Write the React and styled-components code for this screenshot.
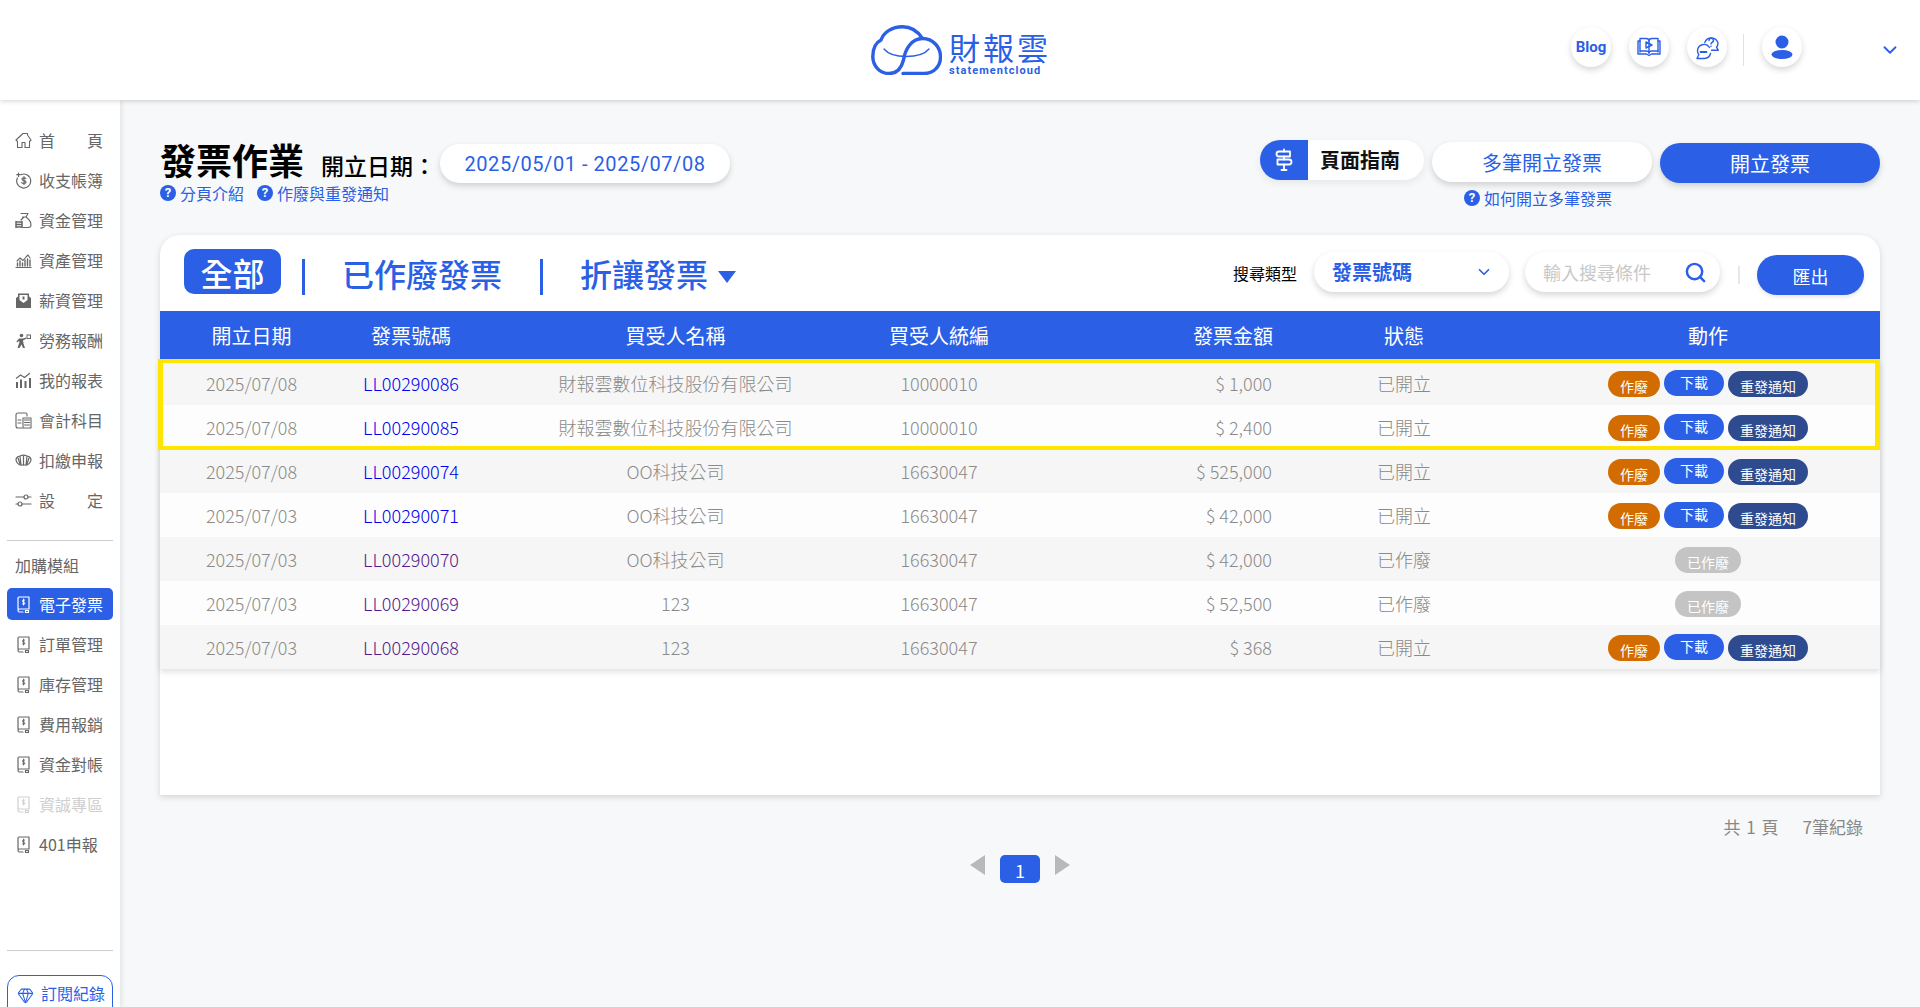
import React from 'react'
import styled, { createGlobalStyle } from 'styled-components'
import { ChevronDown, Search, Gem } from 'lucide-react'

const BLUE = '#2a5fe6'
const FONT = '"Noto Sans CJK TC", "Noto Sans", sans-serif'

const GlobalStyle = createGlobalStyle`
    html, body {
        margin: 0;
        height: 100%;
        overflow: hidden;
        background: #f7f8fa;
        font-family: ${FONT};
    }
    * { box-sizing: border-box; }
`

const Page = styled.div`
    height: 1007px;
    display: flex;
    flex-direction: column;
    overflow: hidden;
`

const Header = styled.header`
    height: 100px;
    flex: none;
    background: #fff;
    box-shadow: 0 1px 5px rgba(0,0,0,.18);
    display: grid;
    grid-template-columns: 1fr auto 1fr;
    position: relative;
    z-index: 3;
`

const Logo = styled.div`
    grid-column: 2;
    display: flex;
    align-items: flex-start;
    gap: 7px;
    padding-top: 25px;
`

const LogoText = styled.div`
    display: flex;
    flex-direction: column;
    color: ${BLUE};
    width: 100px;
    .cn {
        font-size: 31px;
        line-height: 37px;
        padding-top: 3px;
        letter-spacing: 3px;
        white-space: nowrap;
    }
    .en {
        font-family: Roboto, sans-serif;
        font-size: 11px;
        font-weight: 700;
        line-height: 12px;
        letter-spacing: 1.05px;
        white-space: nowrap;
    }
`

const HeaderTools = styled.div`
    grid-column: 3;
    display: flex;
    align-items: flex-start;
    justify-content: flex-end;
    padding: 27px 19px 0 0;
`

const RoundBtn = styled.div`
    width: 40px;
    height: 40px;
    border-radius: 50%;
    background: #fff;
    box-shadow: 0 3px 6px rgba(0,0,0,.16);
    display: flex;
    align-items: center;
    justify-content: center;
    color: ${BLUE};
    margin-right: ${p => p.$gap || 18}px;
    font-family: Roboto, sans-serif;
    font-size: 15px;
    font-weight: 700;
`

const HeadSep = styled.div`
    width: 1px;
    height: 32px;
    margin: 7px 18px 0 0;
    background: #e2e2e2;
`

const HeadChevron = styled(ChevronDown)`
    margin: 12px 0 0 -3px;
    color: ${BLUE};
`

const Body = styled.div`
    flex: 1;
    display: flex;
    min-height: 0;
`

const Sidebar = styled.aside`
    width: 120px;
    flex: none;
    background: #fff;
    box-shadow: 2px 0 5px rgba(0,0,0,.08);
    padding: 16px 7px 0;
    overflow: hidden;
    position: relative;
    z-index: 2;
`

const NavItem = styled.div`
    height: 32px;
    margin-top: 8px;
    padding-left: 8px;
    display: flex;
    align-items: center;
    gap: 7px;
    border-radius: 5px;
    font-size: 16px;
    color: ${p => (p.$active ? '#fff' : p.$disabled ? '#cfcfcf' : '#666')};
    background: ${p => (p.$active ? BLUE : 'transparent')};
    svg { flex: none; }
`

const NavLabel = styled.span`
    width: 64px;
    white-space: nowrap;
    text-align: ${p => (p.$spread ? 'justify' : 'left')};
    text-align-last: ${p => (p.$spread ? 'justify' : 'left')};
`

const SideLine = styled.div`
    height: 1px;
    background: #ccc;
    margin-top: ${p => p.$top}px;
`

const GroupLabel = styled.div`
    height: 28px;
    margin-top: 11px;
    padding: 0 0 1px 8px;
    margin-bottom: 1px;
    line-height: 26px;
    font-size: 16px;
    color: #666;
`

const SubscribeBtn = styled.div`
    height: 44px;
    margin-top: 24px;
    border: 1.5px solid ${BLUE};
    border-radius: 12px;
    padding: 5px 0 0 9px;
    display: flex;
    align-items: flex-start;
    gap: 7px;
    color: ${BLUE};
    font-size: 16px;
    white-space: nowrap;
    svg { margin-top: 6px; }
`

const Main = styled.main`
    flex: 1;
    min-width: 0;
    padding: 0 40px;
`

const TopRow = styled.div`
    height: 135px;
    display: flex;
    justify-content: space-between;
`

const TitleBlock = styled.div`
    padding-top: 44px;
`

const TitleLine = styled.div`
    height: 39px;
    display: flex;
    align-items: center;
`

const Title = styled.h1`
    margin: 0 17px 9px 0;
    font-size: 36px;
    line-height: 40px;
    font-weight: 700;
    color: #000;
    white-space: nowrap;
`

const DateLabel = styled.span`
    width: 119px;
    font-size: 23px;
    font-weight: 500;
    color: #000;
    white-space: nowrap;
    margin-top: 3px;
`

const DatePill = styled.div`
    width: 290px;
    height: 39px;
    border-radius: 20px;
    background: #fff;
    box-shadow: 0 3px 6px rgba(0,0,0,.16);
    display: flex;
    align-items: center;
    justify-content: center;
    color: ${BLUE};
    font-family: Roboto, sans-serif;
    font-size: 20px;
    letter-spacing: .55px;
    white-space: nowrap;
`

const HelpLinks = styled.div`
    display: flex;
    gap: 13px;
    height: 20px;
`

const HelpLink = styled.span`
    display: inline-flex;
    align-items: center;
    gap: 4px;
    font-size: 16px;
    line-height: 20px;
    color: ${BLUE};
    white-space: nowrap;
`

const HelpDot = styled.i`
    width: 16px;
    height: 16px;
    border-radius: 50%;
    background: ${BLUE};
    color: #fff;
    font-style: normal;
    font-family: Roboto, sans-serif;
    font-weight: 700;
    font-size: 13px;
    line-height: 16px;
    text-align: center;
    flex: none;
`

const RightBlock = styled.div`
    padding-top: 40px;
    display: flex;
    flex-direction: column;
`

const ActionRow = styled.div`
    display: flex;
    align-items: flex-start;
`

const GuideBtn = styled.div`
    width: 164px;
    height: 40px;
    border-radius: 20px;
    background: #fff;
    box-shadow: 0 3px 8px rgba(0,0,0,.07);
    display: flex;
    overflow: hidden;
    margin-right: 8px;
    .ico {
        width: 48px;
        background: ${BLUE};
        color: #fff;
        display: flex;
        align-items: center;
        justify-content: center;
    }
    .txt {
        flex: 1;
        padding-right: 12px;
        text-align: center;
        font-size: 20px;
        font-weight: 700;
        line-height: 40px;
        color: #111;
    }
`

const PillBtn = styled.div`
    width: 220px;
    height: 40px;
    margin-top: ${p => p.$top}px;
    margin-left: ${p => p.$left || 0}px;
    border-radius: 20px;
    background: ${p => (p.$primary ? BLUE : '#fff')};
    color: ${p => (p.$primary ? '#fff' : BLUE)};
    box-shadow: 0 3px 6px rgba(0,0,0,.16);
    text-align: center;
    font-size: 20px;
    line-height: 41px;
`

const HintLink = styled(HelpLink)`
    align-self: flex-end;
    margin: 5px 268px 0 0;
`

const Card = styled.section`
    height: 560px;
    background: #fff;
    border-radius: 20px 20px 0 0;
    box-shadow: 0 2px 6px rgba(0,0,0,.15);
`

const Toolbar = styled.div`
    height: 76px;
    display: flex;
    align-items: center;
    padding: 0 16px 0 24px;
`

const ActiveTab = styled.div`
    width: 97px;
    height: 45px;
    margin-top: -4px;
    border-radius: 10px;
    background: ${BLUE};
    color: #fff;
    font-size: 32px;
    font-weight: 500;
    line-height: 47px;
    text-align: center;
`

const TabSep = styled.div`
    width: 3px;
    height: 36px;
    margin: 8px 0 0 ${p => p.$left || 0}px;
    background: ${BLUE};
`

const Tab = styled.div`
    margin: 0 ${p => p.$right}px 0 ${p => p.$left}px;
    color: ${BLUE};
    font-size: 32px;
    font-weight: 500;
    line-height: 40px;
    white-space: nowrap;
`

const Caret = styled.div`
    width: 0;
    height: 0;
    margin: 8px 0 0 -31px;
    border-left: 9.5px solid transparent;
    border-right: 9.5px solid transparent;
    border-top: 12px solid ${BLUE};
`

const SearchTools = styled.div`
    margin-left: auto;
    display: flex;
    align-items: center;
`

const SearchLabel = styled.span`
    font-size: 16px;
    color: #000;
    margin-right: 17px;
    white-space: nowrap;
`

const SelectBox = styled.div`
    width: 195px;
    height: 40px;
    border-radius: 20px;
    background: #fff;
    box-shadow: 0 3px 6px rgba(0,0,0,.16);
    display: flex;
    align-items: center;
    justify-content: space-between;
    padding: 0 16px 0 18px;
    color: ${BLUE};
    font-size: 20px;
    font-weight: 700;
    margin: -3px 16px 0 0;
`

const SearchBox = styled.div`
    width: 195px;
    height: 40px;
    border-radius: 20px;
    background: #fff;
    box-shadow: 0 3px 6px rgba(0,0,0,.16);
    display: flex;
    align-items: center;
    justify-content: space-between;
    padding: 0 13px 0 18px;
    font-size: 18px;
    color: #c8c8c8;
    margin-top: -2px;
    svg { color: ${BLUE}; }
`

const ToolSep = styled.div`
    width: 2px;
    height: 18px;
    margin: 3px 17px 0 18px;
    background: #ece6e2;
`

const ExportBtn = styled.div`
    width: 107px;
    height: 40px;
    border-radius: 20px;
    background: ${BLUE};
    color: #fff;
    text-align: center;
    font-size: 18px;
    line-height: 42px;
    margin-top: 4px;
    box-shadow: 0 2px 4px rgba(0,0,0,.1);
`

const columns = '183px 136px 393px 134px 334px 128px 1fr'

const TableHead = styled.div`
    height: 50px;
    padding-bottom: 2px;
    display: grid;
    grid-template-columns: ${columns};
    background: ${BLUE};
    color: #fff;
    font-size: 20px;
    align-items: center;
    text-align: center;
`

const Rows = styled.div`
    position: relative;
    box-shadow: 0 3px 6px rgba(0,0,0,.12);
`

const Row = styled.div`
    height: 44px;
    display: grid;
    grid-template-columns: ${columns};
    align-items: center;
    text-align: center;
    font-size: 18px;
    font-weight: 300;
    color: #8a8a8a;
    background: ${p => (p.$odd ? '#f6f6f6' : '#fdfdfd')};
`

const Cell = styled.div`
    padding-bottom: 1px;
    white-space: nowrap;
`

const HeadAmount = styled.div`
    padding-left: 120px;
`

const HeadActions = styled.div`
    padding-left: 68px;
`

const AmountCell = styled(Cell)`
    text-align: right;
    padding-right: 68px;
`

const InvoiceLink = styled.a`
    color: ${p => (p.$visited ? '#551a8b' : '#0000ee')};
    text-decoration: none;
`

const ActionCell = styled.div`
    padding-left: 68px;
    display: flex;
    justify-content: center;
    align-items: center;
    gap: 4px;
`

const RowBtn = styled.div`
    width: ${p => p.$w}px;
    height: 26px;
    border-radius: 13px;
    background: ${p => p.$bg};
    color: #fff;
    font-size: 14px;
    font-weight: 400;
    line-height: ${p => (p.$up ? 24 : 30)}px;
    text-align: center;
    overflow: hidden;
    margin-top: ${p => (p.$up ? -1 : 1)}px;
`

const Highlight = styled.div`
    position: absolute;
    top: -2px;
    left: -2px;
    right: 0;
    height: 91px;
    border-style: solid;
    border-color: #ffe600;
    border-width: 4px 5px;
    pointer-events: none;
`

const Summary = styled.div`
    display: flex;
    justify-content: flex-end;
    gap: 24px;
    padding: 20px 17px 0 0;
    font-size: 17px;
    line-height: 24px;
    word-spacing: 2px;
    color: #888;
`

const Pager = styled.div`
    display: flex;
    justify-content: center;
    align-items: flex-start;
    gap: 15px;
    margin-top: 16px;
`

const PageNo = styled.div`
    width: 40px;
    height: 28px;
    border-radius: 5px;
    background: ${BLUE};
    color: #fff;
    font-size: 18px;
    line-height: 31px;
    text-align: center;
`

const Arrow = styled.div`
    width: 0;
    height: 0;
    border-top: 10px solid transparent;
    border-bottom: 10px solid transparent;
    ${p => (p.$left
        ? 'border-right: 15px solid #b9b9b9;'
        : 'border-left: 15px solid #b9b9b9;')}
`

const lineIcon = { fill: 'none', stroke: 'currentColor', strokeWidth: 1.5, strokeLinecap: 'round', strokeLinejoin: 'round' }

const CloudLogo = () => (
    <svg width="71" height="50" viewBox="0 0 71 50" fill="none" stroke={BLUE} strokeWidth="3.4" strokeLinecap="round">
        <path d="M32 48.5H53C63 48.5 69.5 41 69.5 32C69.5 22 62 13.5 51.5 13.5C46 5 39 1.8 31.5 1.8C21 1.8 13 7 10 15C4 18 1.8 25 1.8 31.5C1.8 41 9 48.5 18 48.5C26 48.5 30.5 43 32.5 35C34 25 40 13.5 51.5 13.5" />
        <path d="M13 24C18 30 28 31.5 35 31.5C43 31.5 53 30 58 24" strokeWidth="1.4" />
    </svg>
)

const VideoBook = () => (
    <svg width="24" height="20" viewBox="0 0 24 20" {...lineIcon} strokeWidth="1.4">
        <path d="M3 4H1v13h8.5l2.5 1.5 2.5-1.5H23V4h-2" />
        <path d="M3 15V1.5h6c2 0 3 1 3 2.5v12c0-1-1-2-3-2H3" />
        <path d="M21 15V1.5h-6c-2 0-3 1-3 2.5" />
        <path d="M21 14h-6c-2 0-3 1-3 2" />
        <path d="M9 5v6l6-3z" />
    </svg>
)

const ChatHelp = () => (
    <svg width="25" height="25" viewBox="0 0 25 25" {...lineIcon} strokeWidth="1.4">
        <path d="M9.8 7.5A7 7 0 0 1 23 8c0 2-.5 3.2-1.5 4.2l1.8 3h-6.8" />
        <path d="M14.5 12.5A6.5 6.5 0 0 0 2.5 16c0 1.5.5 2.8 1.3 3.8L2 23.5h7.5a6.5 6.5 0 0 0 6-5" />
        <path d="M5.5 17h6" strokeWidth="1.8" />
        <path d="M14 5.5a2.2 2.2 0 1 1 3 2c-.6.3-1 .7-1 1.5" />
        <path d="M16 11.2v.2" />
    </svg>
)

const UserIcon = () => (
    <svg width="22" height="24" viewBox="0 0 22 24" fill={BLUE}>
        <circle cx="11" cy="7" r="6.5" />
        <ellipse cx="11" cy="19.5" rx="10.5" ry="4.5" />
    </svg>
)

const GuidePost = () => (
    <svg width="24" height="24" viewBox="0 0 24 24" {...lineIcon} strokeWidth="1.8">
        <path d="M7 3.5h11v5H7a2.5 2.5 0 0 1 0-5z" />
        <path d="M5.5 11.500H17a2.500 2.500 0 0 1 0 5H5.500z" />
        <path d="M12 1.5v2M12 8.5v3M12 16.5v5.500M9.500 22h5" />
    </svg>
)

const HomeIcon = () => (
    <svg width="17" height="17" viewBox="0 0 17 17" {...lineIcon} strokeWidth="1.1">
        <path d="M1 8L8 1.5h4.5V3L16 8l-1.5 1.5V15.5H10V10.5H7V15.5H2.5V9.5z" />
    </svg>
)

const CoinIcon = () => (
    <svg width="17" height="17" viewBox="0 0 17 17" {...lineIcon} strokeWidth="1.2">
        <path d="M6 2.6A7 7 0 1 1 2.4 6" />
        <path d="M3.5 1v3.5M1.8 2.7h3.4" />
        <path d="M10.8 6.6C10.4 5.6 7 5.4 7 7.2c0 1.8 4 1 4 2.9 0 1.8-3.5 1.6-4.2.5M9 4.5v8" />
    </svg>
)

const MoneyBag = () => (
    <svg width="17" height="17" viewBox="0 0 17 17" {...lineIcon} strokeWidth="1.1">
        <path d="M6 1.5h7L11 5c2 1.5 5 5 5 8 0 1.5-1 2.5-3 2.5H8M7.5 5h4M9 5L6 8" />
        <path d="M1 10h6M1 12.5h6M1 15h6M1 9.5v6M7 9.5v6" strokeWidth="1.5" />
    </svg>
)

const AssetChart = () => (
    <svg width="17" height="17" viewBox="0 0 17 17" {...lineIcon} strokeWidth="1.1">
        <path d="M1 15.5h15" />
        <path d="M2.5 14v-3M5 14V9M7.5 14v-3M10 14V8M12.5 14V7M15 14V8" strokeWidth="1.4" />
        <path d="M2 9l3-3 3 2.5 3-3.5 2-2 2 3" />
    </svg>
)

const SalaryIcon = () => (
    <svg width="17" height="17" viewBox="0 0 17 17" fill="currentColor">
        <path d="M1 6l2-1.5V1.500h11v3L16 6v10H1zM4.500 3v5l4 3 4-3V3z" fillRule="evenodd" />
        <path d="M7.500 4.500h2v3h-2z" />
    </svg>
)

const WorkerIcon = () => (
    <svg width="17" height="17" viewBox="0 0 17 17" fill="currentColor">
        <circle cx="6.5" cy="3.5" r="1.8" />
        <path d="M4 6.5h4l3-1 .5 1-3.5 2 .5 3L10 16H8l-1.5-3.5L4.5 16H2.5L4.5 10l-.5-1-2 1.5-.5-1z" />
        <path d="M11.5 2.5H16V7h-4.5zM12.5 3.5V6H15V3.5z" fillRule="evenodd" />
    </svg>
)

const ReportIcon = () => (
    <svg width="17" height="17" viewBox="0 0 17 17" fill="currentColor">
        <path d="M1 10h2v6H1zM5 7.5h2V16H5zM9.5 9h2v7h-2zM14 6h2v10h-2z" />
        <path d="M1 6.5L5.5 3l4 2.5L15 1" fill="none" stroke="currentColor" strokeWidth="1.1" />
    </svg>
)

const LedgerIcon = () => (
    <svg width="17" height="17" viewBox="0 0 17 17" {...lineIcon} strokeWidth="1.1">
        <path d="M12 4V2.5C12 1.5 11.5 1 10.5 1H3C2 1 1 2 1 3v11c0 1 .8 2 2 2h4" />
        <path d="M8 6h8v10H8zM9.5 8h5M9.5 10.5h5M9.5 13h5M3 8h3M3 11h3" />
    </svg>
)

const WithholdIcon = () => (
    <svg width="17" height="17" viewBox="0 0 17 17" {...lineIcon} strokeWidth="1.2">
        <path d="M1 7c0 3 2 5 4 6h7c2-1 4-3 4-6-1-2-3-3-4-3-2-1-5-1-7 0C4 4 2 5 1 7z" />
        <path d="M5 4.5L6 13M8.5 4v9M12 4.5L11 13M3 6l2 6M14 6l-2 6" />
    </svg>
)

const SlidersIcon = () => (
    <svg width="17" height="17" viewBox="0 0 17 17" {...lineIcon} strokeWidth="1.2">
        <path d="M1 5h8M13 5h3M1 12h2M7 12h9" />
        <circle cx="11" cy="5" r="2" />
        <circle cx="5" cy="12" r="2" />
    </svg>
)

const BookIcon = () => (
    <svg width="17" height="17" viewBox="0 0 17 17" {...lineIcon} strokeWidth="1.2">
        <path d="M3 13V2c0-.6.4-1 1-1h10v12H4.5C3.5 13 3 13.8 3 14.5S3.5 16 4.5 16H8" />
        <path d="M10.5 14.5h3v2h-3z" />
        <path d="M9.8 4.3C9.4 3.7 7.4 3.7 7.4 5.1c0 1.4 2.5.8 2.5 2.2 0 1.3-2.1 1.2-2.6.5M8.6 3v6" strokeWidth="1" />
    </svg>
)

const mainNav = [
    { label: '首 頁', icon: <HomeIcon />, spread: true },
    { label: '收支帳簿', icon: <CoinIcon /> },
    { label: '資金管理', icon: <MoneyBag /> },
    { label: '資產管理', icon: <AssetChart /> },
    { label: '薪資管理', icon: <SalaryIcon /> },
    { label: '勞務報酬', icon: <WorkerIcon /> },
    { label: '我的報表', icon: <ReportIcon /> },
    { label: '會計科目', icon: <LedgerIcon /> },
    { label: '扣繳申報', icon: <WithholdIcon /> },
    { label: '設 定', icon: <SlidersIcon />, spread: true },
]

const moduleNav = [
    { label: '電子發票', active: true },
    { label: '訂單管理' },
    { label: '庫存管理' },
    { label: '費用報銷' },
    { label: '資金對帳' },
    { label: '資誠專區', disabled: true },
    { label: '401申報' },
]

const LONG_NAME = '財報雲數位科技股份有限公司'

const invoices = [
    { date: '2025/07/08', no: 'LL00290086', buyer: LONG_NAME, tax: '10000010', amount: '$ 1,000', open: true },
    { date: '2025/07/08', no: 'LL00290085', buyer: LONG_NAME, tax: '10000010', amount: '$ 2,400', open: true },
    { date: '2025/07/08', no: 'LL00290074', buyer: 'OO科技公司', tax: '16630047', amount: '$ 525,000', open: true },
    { date: '2025/07/03', no: 'LL00290071', buyer: 'OO科技公司', tax: '16630047', amount: '$ 42,000', open: true },
    { date: '2025/07/03', no: 'LL00290070', buyer: 'OO科技公司', tax: '16630047', amount: '$ 42,000', open: false, visited: true },
    { date: '2025/07/03', no: 'LL00290069', buyer: '123', tax: '16630047', amount: '$ 52,500', open: false, visited: true },
    { date: '2025/07/03', no: 'LL00290068', buyer: '123', tax: '16630047', amount: '$ 368', open: true, visited: true },
]

const App = () => (
    <Page>
        <GlobalStyle />
        <Header>
            <Logo>
                <CloudLogo />
                <LogoText>
                    <span className="cn">財報雲</span>
                    <span className="en">statementcloud</span>
                </LogoText>
            </Logo>
            <HeaderTools>
                <RoundBtn>Blog</RoundBtn>
                <RoundBtn><VideoBook /></RoundBtn>
                <RoundBtn $gap={16}><ChatHelp /></RoundBtn>
                <HeadSep />
                <RoundBtn $gap={80}><UserIcon /></RoundBtn>
                <HeadChevron size={22} strokeWidth={2} />
            </HeaderTools>
        </Header>
        <Body>
            <Sidebar>
                {mainNav.map(item => (
                    <NavItem key={item.label}>
                        {item.icon}
                        <NavLabel $spread={item.spread}>{item.label}</NavLabel>
                    </NavItem>
                ))}
                <SideLine $top={24} />
                <GroupLabel>加購模組</GroupLabel>
                {moduleNav.map(item => (
                    <NavItem key={item.label} $active={item.active} $disabled={item.disabled}>
                        <BookIcon />
                        <NavLabel>{item.label}</NavLabel>
                    </NavItem>
                ))}
                <SideLine $top={90} />
                <SubscribeBtn>
                    <Gem size={17} strokeWidth={1.5} />
                    訂閱紀錄
                </SubscribeBtn>
            </Sidebar>
            <Main>
                <TopRow>
                    <TitleBlock>
                        <TitleLine>
                            <Title>發票作業</Title>
                            <DateLabel>開立日期：</DateLabel>
                            <DatePill>2025/05/01 - 2025/07/08</DatePill>
                        </TitleLine>
                        <HelpLinks>
                            <HelpLink><HelpDot>?</HelpDot>分頁介紹</HelpLink>
                            <HelpLink><HelpDot>?</HelpDot>作廢與重發通知</HelpLink>
                        </HelpLinks>
                    </TitleBlock>
                    <RightBlock>
                        <ActionRow>
                            <GuideBtn>
                                <div className="ico"><GuidePost /></div>
                                <div className="txt">頁面指南</div>
                            </GuideBtn>
                            <PillBtn $top={2}>多筆開立發票</PillBtn>
                            <PillBtn $top={3} $left={8} $primary>開立發票</PillBtn>
                        </ActionRow>
                        <HintLink><HelpDot>?</HelpDot>如何開立多筆發票</HintLink>
                    </RightBlock>
                </TopRow>
                <Card>
                    <Toolbar>
                        <ActiveTab>全部</ActiveTab>
                        <TabSep $left={21} />
                        <Tab $left={37} $right={38}>已作廢發票</Tab>
                        <TabSep />
                        <Tab $left={37} $right={41}>折讓發票</Tab>
                        <Caret />
                        <SearchTools>
                            <SearchLabel>搜尋類型</SearchLabel>
                            <SelectBox>
                                發票號碼
                                <ChevronDown size={18} strokeWidth={2.2} />
                            </SelectBox>
                            <SearchBox>
                                輸入搜尋條件
                                <Search size={23} strokeWidth={2.6} />
                            </SearchBox>
                            <ToolSep />
                            <ExportBtn>匯出</ExportBtn>
                        </SearchTools>
                    </Toolbar>
                    <TableHead>
                        <div>開立日期</div>
                        <div>發票號碼</div>
                        <div>買受人名稱</div>
                        <div>買受人統編</div>
                        <HeadAmount>發票金額</HeadAmount>
                        <div>狀態</div>
                        <HeadActions>動作</HeadActions>
                    </TableHead>
                    <Rows>
                        {invoices.map((row, i) => (
                            <Row key={row.no} $odd={i % 2 === 0}>
                                <Cell>{row.date}</Cell>
                                <Cell><InvoiceLink href="#" $visited={row.visited}>{row.no}</InvoiceLink></Cell>
                                <Cell>{row.buyer}</Cell>
                                <Cell>{row.tax}</Cell>
                                <AmountCell>{row.amount}</AmountCell>
                                <Cell>{row.open ? '已開立' : '已作廢'}</Cell>
                                <ActionCell>
                                    {row.open ? (
                                        <>
                                            <RowBtn $w={52} $bg="#d26c00">作廢</RowBtn>
                                            <RowBtn $w={60} $bg={BLUE} $up>下載</RowBtn>
                                            <RowBtn $w={80} $bg="#2e4b90">重發通知</RowBtn>
                                        </>
                                    ) : (
                                        <RowBtn $w={66} $bg="#c4c4c4">已作廢</RowBtn>
                                    )}
                                </ActionCell>
                            </Row>
                        ))}
                        <Highlight />
                    </Rows>
                </Card>
                <Summary>
                    <span>共 1 頁</span>
                    <span>7筆紀錄</span>
                </Summary>
                <Pager>
                    <Arrow $left />
                    <PageNo>1</PageNo>
                    <Arrow />
                </Pager>
            </Main>
        </Body>
    </Page>
)

export default App
